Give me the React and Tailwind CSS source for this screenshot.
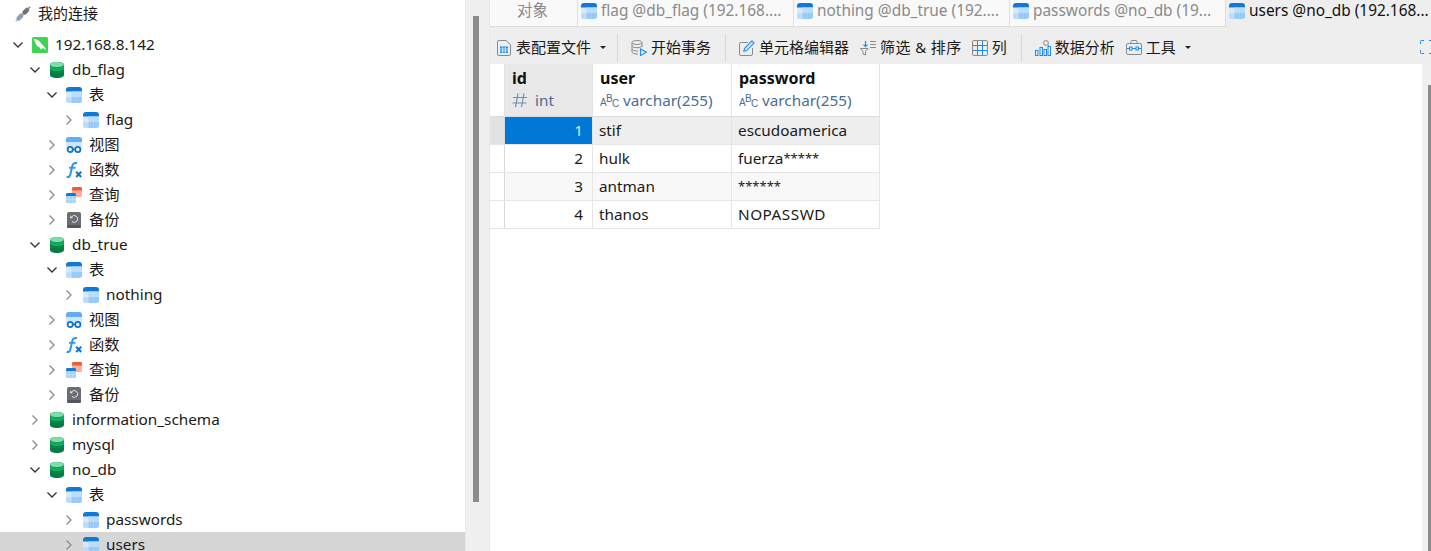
import React from "react";

const FONT = "font-['Noto_Sans','Noto_Sans_CJK_SC',sans-serif]";

function TableIcon({ className = "" }) {
  return (
    <svg width="16" height="16" viewBox="0 0 16 16" className={className}>
      <rect x="0" y="0" width="16" height="16" rx="3" fill="#d6e9fd" />
      <path d="M0 3a3 3 0 0 1 3-3h10a3 3 0 0 1 3 3v1.500H0z" fill="#0f7ad6" />
      <rect x="5.500" y="4.500" width="5" height="5.500" fill="#bcdcfb" />
      <rect x="0" y="10" width="5.500" height="6" rx="2" fill="#bcdcfb" />
      <rect x="10.500" y="4.500" width="5.500" height="5.500" fill="#bcdcfb" />
      <rect x="5.500" y="10" width="5" height="6" fill="#97cafa" />
      <path d="M10.500 10H16v3a3 3 0 0 1-3 3h-2.500z" fill="#97cafa" />
    </svg>
  );
}

function DbIcon() {
  return (
    <svg width="14" height="16" viewBox="0 0 14 16">
      <path d="M0 2.500C0 1 3 0 7 0s7 1 7 2.500V13c0 1.700-3 3-7 3s-7-1.300-7-3z" fill="#0a7a45" />
      <ellipse cx="7" cy="2.600" rx="7" ry="2.600" fill="#7be0a8" />
      <path d="M0 3.500C1 5 3.500 5.600 7 5.600S13 5 14 3.500V7C13 8.700 10.500 9.300 7 9.300S1 8.700 0 7z" fill="#12ab62" />
      <path d="M0 8.300C1 9.900 3.500 10.500 7 10.500S13 9.900 14 8.300V9.800C13 11 10.500 11.500 7 11.500S1 11 0 9.800z" fill="#0b8a4d" />
    </svg>
  );
}

function ServerIcon() {
  return (
    <svg width="16" height="16" viewBox="0 0 16 16">
      <rect width="16" height="16" rx="1.500" fill="#3fd454" />
      <path d="M1.500 2c3.200.2 5.400 1.400 7 3.400 1.300 1.600 2.400 3 3.500 4.200.8.900 1.800 2.100 2.300 4-1.200-1.400-2.200-2-3.500-2.300-.6 1-1.700 1.200-2.900.9.500-.5.700-1 .5-1.500C6 10.200 4 8.400 3.400 5.800 3 4.300 2.400 3 1.500 2z" fill="#fff" />
    </svg>
  );
}

function ViewIcon() {
  return (
    <svg width="16" height="16" viewBox="0 0 16 16">
      <rect width="16" height="13" rx="3" fill="#cfe5fc" />
      <path d="M0 3a3 3 0 0 1 3-3h10a3 3 0 0 1 3 3v2H0z" fill="#62aef2" />
      <circle cx="4.200" cy="12.500" r="2.600" fill="#fff" stroke="#1272cc" strokeWidth="1.800" />
      <circle cx="11.800" cy="12.500" r="2.600" fill="#fff" stroke="#1272cc" strokeWidth="1.800" />
      <rect x="6.500" y="11.700" width="3" height="1.500" fill="#1272cc" />
    </svg>
  );
}

function FuncIcon() {
  return (
    <svg width="16" height="16" viewBox="0 0 16 16" fill="none">
      <path d="M11 1.200C8.500.4 7 1.500 6.400 3.500L4.300 12.800C3.800 14.800 2.600 15.400.6 14.900" stroke="#2b96ee" strokeWidth="2" />
      <path d="M3 5.800h6.500" stroke="#2b96ee" strokeWidth="1.800" />
      <path d="M10.200 9.800l5 5.200M15.200 9.800l-5 5.200" stroke="#1272cc" strokeWidth="2" />
    </svg>
  );
}

function QueryIcon() {
  return (
    <svg width="16" height="16" viewBox="0 0 16 16">
      <rect x="6" y="0" width="10" height="10" rx="1.500" fill="#fbb09c" />
      <path d="M6 1.500A1.500 1.500 0 0 1 7.500 0h7A1.500 1.500 0 0 1 16 1.500V3.500H6z" fill="#f05a3a" />
      <rect x="0" y="6" width="10" height="10" rx="1.500" fill="#a9d2fa" />
      <path d="M0 7.500A1.500 1.500 0 0 1 1.500 6h7A1.500 1.500 0 0 1 10 7.500V9H0z" fill="#0f7ad6" />
      <path d="M3.300 9v7M6.700 9v7M0 12.500h10" stroke="#c9e3fc" strokeWidth=".7" />
    </svg>
  );
}

function BackupIcon() {
  return (
    <svg width="14" height="16" viewBox="0 0 14 16" fill="none">
      <rect width="14" height="16" rx="2" fill="#6a6e74" />
      <rect y="13" width="14" height="3" rx="1.500" fill="#53565b" />
      <path d="M4.500 5A3.400 3.400 0 1 1 5 9.500" stroke="#e8e8e8" strokeWidth="1" />
      <path d="M3.200 3.500v2.800H6z" fill="#e8e8e8" />
    </svg>
  );
}

function Chevron({ open }) {
  return open ? (
    <svg width="12" height="12" viewBox="0 0 12 12" fill="none">
      <path d="M1.500 3.500L6 8l4.500-4.500" stroke="#333" strokeWidth="1.300" />
    </svg>
  ) : (
    <svg width="12" height="12" viewBox="0 0 12 12" fill="none">
      <path d="M3.500 1.500L8 6l-4.500 4.500" stroke="#8a8a8a" strokeWidth="1.300" />
    </svg>
  );
}

const ICONS = {
  server: <ServerIcon />,
  db: <DbIcon />,
  table: <TableIcon />,
  view: <ViewIcon />,
  func: <FuncIcon />,
  query: <QueryIcon />,
  backup: <BackupIcon />,
};

const ROWS = [
  [0, true, "server", "192.168.8.142"],
  [1, true, "db", "db_flag"],
  [2, true, "table", "表"],
  [3, false, "table", "flag"],
  [2, false, "view", "视图"],
  [2, false, "func", "函数"],
  [2, false, "query", "查询"],
  [2, false, "backup", "备份"],
  [1, true, "db", "db_true"],
  [2, true, "table", "表"],
  [3, false, "table", "nothing"],
  [2, false, "view", "视图"],
  [2, false, "func", "函数"],
  [2, false, "query", "查询"],
  [2, false, "backup", "备份"],
  [1, false, "db", "information_schema"],
  [1, false, "db", "mysql"],
  [1, true, "db", "no_db"],
  [2, true, "table", "表"],
  [3, false, "table", "passwords"],
  [3, false, "table", "users", true],
];

const INDENT = ["pl-[12px]", "pl-[29px]", "pl-[46px]", "pl-[63px]"];

function TreeRow({ level, open, icon, label, selected }) {
  return (
    <div className={`flex h-[25px] shrink-0 items-center ${INDENT[level]} ${selected ? "bg-[#d6d6d6]" : ""}`}>
      <span className="flex w-[12px] shrink-0 justify-center">
        <Chevron open={open} />
      </span>
      <span className="ml-[8px] flex w-[16px] shrink-0 justify-center">{ICONS[icon]}</span>
      <span className="ml-[7px] whitespace-nowrap text-[15.3px] leading-none text-[#1a1a1a]">{label}</span>
    </div>
  );
}

function Tab({ label, active, first, className = "" }) {
  return (
    <div
      className={`flex h-[27px] shrink-0 items-center border-b border-[#dddddd] pb-[5px] ${className} ${
        active ? "border-b-transparent bg-[#eeeeee] text-[#111]" : "border-r bg-[#f9f9f9] text-[#8a8a8a]"
      } ${first ? "justify-center" : "pl-[3px]"}`}
    >
      {!first && <TableIcon className="shrink-0" />}
      <span className={`whitespace-nowrap text-[15.4px] leading-none ${first ? "" : "ml-[4px]"}`}>{label}</span>
    </div>
  );
}

function Caret({ className = "" }) {
  return <span className={`h-0 w-0 border-x-[3px] border-t-[3px] border-x-transparent border-t-[#222] ${className}`} />;
}

function Sep({ className = "" }) {
  return <span className={`h-[28px] w-px shrink-0 bg-[#d8d8d8] ${className}`} />;
}

function Tool({ icon, label, className = "", labelClass = "" }) {
  return (
    <div className={`flex items-center ${className}`}>
      <span className="flex w-[16px] shrink-0 justify-center">{icon}</span>
      <span className={`ml-[4px] whitespace-nowrap text-[15px] leading-none text-[#1a1a1a] ${labelClass}`}>{label}</span>
    </div>
  );
}

const ProfileIcon = (
  <svg width="14" height="16" viewBox="0 0 14 16" fill="none">
    <path d="M2 .5h7l4.500 4V14a1.500 1.500 0 0 1-1.500 1.500H2A1.500 1.500 0 0 1 .5 14V2A1.500 1.500 0 0 1 2 .5z" stroke="#8a8a8a" />
    <rect x="3" y="6.500" width="8" height="6.500" fill="#1a8cf0" />
    <path d="M3 9h8M3 11h8M5.700 7v6M8.300 7v6" stroke="#fff" strokeWidth=".7" />
  </svg>
);
const TxIcon = (
  <svg width="16" height="16" viewBox="0 0 16 16" fill="none">
    <ellipse cx="6" cy="2.500" rx="5" ry="2" stroke="#8a8a8a" />
    <path d="M1 2.500v9.500c0 1.100 2 2 5 2h1M11 2.500V7M1 5.700c0 1.100 2 2 5 2s5-.9 5-2M1 9c0 1.100 2 2 5 2h1" stroke="#8a8a8a" />
    <path d="M9.500 9v6.500L15.500 12.200z" stroke="#1a8cf0" strokeWidth="1.100" />
  </svg>
);
const EditIcon = (
  <svg width="16" height="16" viewBox="0 0 16 16" fill="none">
    <path d="M9 2.500H2A1.500 1.500 0 0 0 .5 4v10A1.500 1.500 0 0 0 2 15.500h10a1.500 1.500 0 0 0 1.500-1.500V8" stroke="#8a8a8a" />
    <path d="M13 .9l2 2-7.500 7.700-2.700.7.700-2.800z" stroke="#1a8cf0" strokeWidth="1.100" />
  </svg>
);
const FilterIcon = (
  <svg width="16" height="16" viewBox="0 0 16 16" fill="none">
    <path d="M.5 8.500h7.500L5.500 11.500V15L3 14v-2.500z" stroke="#8a8a8a" />
    <path d="M5.500 1v5.500M3.500 4.700l2 2 2-2" stroke="#1a8cf0" strokeWidth="1.200" />
    <path d="M10 1.500h6M10 4.500h6M10 7.500h6" stroke="#8a8a8a" />
  </svg>
);
const ColumnsIcon = (
  <svg width="16" height="16" viewBox="0 0 16 16" fill="none">
    <rect x=".5" y=".5" width="15" height="15" rx="1.500" stroke="#8a8a8a" />
    <path d="M5.500 1v14M10.500 1v14M1 5.500h14M1 10.500h14" stroke="#1a8cf0" />
  </svg>
);
const ChartIcon = (
  <svg width="16" height="16" viewBox="0 0 16 16" fill="none">
    <rect x=".5" y="10.500" width="2.500" height="5" stroke="#1a8cf0" />
    <rect x="5" y="7.500" width="2.500" height="8" stroke="#1a8cf0" />
    <rect x="9" y="9.500" width="2.500" height="6" stroke="#1a8cf0" />
    <rect x="13" y="6.500" width="2.500" height="9" stroke="#1a8cf0" />
    <circle cx="11" cy="3" r="2.400" stroke="#8a8a8a" />
    <path d="M13 5l2 2" stroke="#8a8a8a" />
  </svg>
);
const ToolsIcon = (
  <svg width="16" height="15" viewBox="0 0 16 15" fill="none">
    <rect x=".5" y="3.500" width="15" height="11" rx="1.500" stroke="#8a8a8a" />
    <path d="M5 3.500V1.500a1 1 0 0 1 1-1h4a1 1 0 0 1 1 1v2" stroke="#8a8a8a" />
    <path d="M1 8.500h14" stroke="#1a8cf0" />
    <rect x="3.500" y="7" width="2.500" height="3" fill="#eee" stroke="#1a8cf0" />
    <rect x="10" y="7" width="2.500" height="3" fill="#eee" stroke="#1a8cf0" />
  </svg>
);

function HeaderCell({ name, type, isInt, className = "" }) {
  return (
    <div className={`flex h-full shrink-0 flex-col border-r border-[#e2e2e2] pl-[7px] ${className}`}>
      <span className="mt-[4px] h-[20px] text-[16px] font-bold leading-[20px] text-[#111]">{name}</span>
      <div className="mt-[3px] flex items-center text-[#4a6d96]">
        {isInt ? (
          <svg width="16" height="16" viewBox="0 0 16 16" fill="none" className="mr-[7px]">
            <path d="M6 1.500L3.500 15M12 1.500L9.500 15M1 5.500h14M.5 11h14" stroke="#6f8fb5" strokeWidth="1.200" />
          </svg>
        ) : (
          <span className="mr-[6px] flex h-[16px] w-[17px] shrink-0 items-end gap-[0.5px] text-[10px] leading-[11px] text-[#4a6d96]">
            <span className="w-[5.500px] font-['Liberation_Sans',sans-serif]">A</span>
            <span className="mb-[4px] w-[5.500px] font-['Liberation_Sans',sans-serif]">B</span>
            <span className="mb-[-1px] w-[5.500px] font-['Liberation_Sans',sans-serif]">C</span>
          </span>
        )}
        <span className="text-[15.3px] leading-[18px]">{type}</span>
      </div>
    </div>
  );
}

const DATA = [
  ["1", "stif", "escudoamerica"],
  ["2", "hulk", ["fuerza", "*****"]],
  ["3", "antman", ["", "******"]],
  ["4", "thanos", "NOPASSWD"],
];

function Password({ value }) {
  if (Array.isArray(value)) {
    return (
      <span>
        {value[0]}
        <span className="relative top-[-1px] text-[13px]">{value[1]}</span>
      </span>
    );
  }
  return <span className={value === "NOPASSWD" ? "tracking-[0.5px]" : ""}>{value}</span>;
}

function DataRow({ row, index }) {
  const sel = index === 0;
  const bg = sel ? "bg-[#eeeeee]" : index === 2 ? "bg-[#f8f8f8]" : "bg-white";
  return (
    <div className="flex h-[28px] w-[390px] border-b border-[#e6e6e6]">
      <div className={`w-[15px] shrink-0 border-r border-[#d8d8d8] ${sel ? "bg-[#e2e2e2]" : "bg-white"}`} />
      <div
        className={`flex w-[88px] shrink-0 items-center justify-end border-r border-[#e6e6e6] pr-[9px] text-[15.3px] leading-none ${
          sel ? "bg-[#0078d7] text-[#dcebf8]" : `${bg} text-[#1a1a1a]`
        }`}
      >
        {row[0]}
      </div>
      <div className={`flex w-[139px] shrink-0 items-center border-r border-[#e6e6e6] pl-[6px] text-[15.3px] leading-none text-[#1a1a1a] ${bg}`}>
        {row[1]}
      </div>
      <div className={`flex w-[148px] shrink-0 items-center border-r border-[#e6e6e6] pl-[6px] text-[15.3px] leading-none text-[#1a1a1a] ${bg}`}>
        <Password value={row[2]} />
      </div>
    </div>
  );
}

export default function App() {
  return (
    <div className={`flex h-[551px] w-[1431px] overflow-hidden bg-white ${FONT}`}>
      {/* left tree */}
      <div className="flex h-full w-[465px] shrink-0 flex-col overflow-hidden pt-[1px]">
        <div className="flex h-[25px] shrink-0 items-center pl-[15px]">
          <svg width="16" height="16" viewBox="0 0 16 16" fill="none">
            <path d="M.7 15.300L3.500 12.500" stroke="#a9b7c9" strokeWidth="1.500" />
            <path d="M3.700 12.300L6.300 9.700" stroke="#8ea0b8" strokeWidth="4.500" strokeLinecap="round" />
            <path d="M7 7.500l1.500-1.500M8.500 9l1.500-1.500" stroke="#8ea0b8" strokeWidth="1" />
            <path d="M9.700 6.300L12 4" stroke="#707070" strokeWidth="4.500" strokeLinecap="round" />
            <path d="M12 4L15.300.7" stroke="#8a8a8a" strokeWidth="1.500" />
          </svg>
          <span className="ml-[7px] whitespace-nowrap text-[15px] leading-none text-[#1a1a1a]">我的连接</span>
        </div>
        <div className="h-[6px] shrink-0" />
        {ROWS.map((r, i) => (
          <TreeRow key={i} level={r[0]} open={r[1]} icon={r[2]} label={r[3]} selected={r[4]} />
        ))}
      </div>

      {/* scroll gutter */}
      <div className="h-full w-[25px] shrink-0 border-x border-[#e8e8e8] bg-[#f0f0f0] pl-[7px] pt-[16px]">
        <div className="h-[486px] w-[6px] bg-[#8c8c8c]" />
      </div>

      {/* right */}
      <div className="flex min-w-0 flex-1 flex-col">
        <div className="flex h-[27px] shrink-0 overflow-hidden">
          <Tab first label="对象" className="w-[88px] pr-[2px]" />
          <Tab label="flag @db_flag (192.168...." className="w-[216px]" />
          <Tab label="nothing @db_true (192...." className="w-[216px]" />
          <Tab label="passwords @no_db (19..." className="w-[216px]" />
          <Tab active label="users @no_db (192.168..." className="flex-1" />
        </div>

        <div className="relative flex h-[37px] shrink-0 items-center bg-[#eeeeee] pl-[6px] pt-[4px]">
          <Tool icon={ProfileIcon} label="表配置文件" />
          <Caret className="ml-[9px]" />
          <Sep className="ml-[11px]" />
          <Tool icon={TxIcon} label="开始事务" className="ml-[13px]" />
          <Sep className="ml-[14px]" />
          <Tool icon={EditIcon} label="单元格编辑器" className="ml-[13px]" />
          <Tool icon={FilterIcon} label="筛选 & 排序" labelClass="tracking-[0.4px]" className="ml-[11px]" />
          <Tool icon={ColumnsIcon} label="列" className="ml-[10px]" />
          <Sep className="ml-[14px]" />
          <Tool icon={ChartIcon} label="数据分析" className="ml-[13px]" />
          <Tool icon={ToolsIcon} label="工具" className="ml-[11px]" />
          <Caret className="ml-[9px]" />
          <svg width="11" height="14" viewBox="0 0 11 14" fill="none" className="absolute right-0 top-[13px]">
            <path d="M.5 4V1.500a1 1 0 0 1 1-1H4M.5 10v2.500a1 1 0 0 0 1 1H4" stroke="#1a8cf0" />
            <path d="M9 .5h2M9 13.500h2" stroke="#1a8cf0" />
          </svg>
        </div>

        <div className="flex min-h-0 flex-1">
          <div className="min-w-0 flex-1">
            <div className="flex h-[53px] w-[390px] border-b border-[#dcdcdc]">
              <div className="w-[15px] shrink-0 border-r border-[#e2e2e2]" />
              <HeaderCell name="id" type="int" isInt className="w-[88px] bg-[#e8e8e8]" />
              <HeaderCell name="user" type="varchar(255)" className="w-[139px]" />
              <HeaderCell name="password" type="varchar(255)" className="w-[148px]" />
            </div>
            {DATA.map((r, i) => (
              <DataRow key={i} row={r} index={i} />
            ))}
          </div>
          <div className="h-full w-[9px] shrink-0 bg-[#f0f0f0] pl-[6px] pt-[21px]">
            <div className="h-full w-[3px] bg-[#8c8c8c]" />
          </div>
        </div>
      </div>
    </div>
  );
}
